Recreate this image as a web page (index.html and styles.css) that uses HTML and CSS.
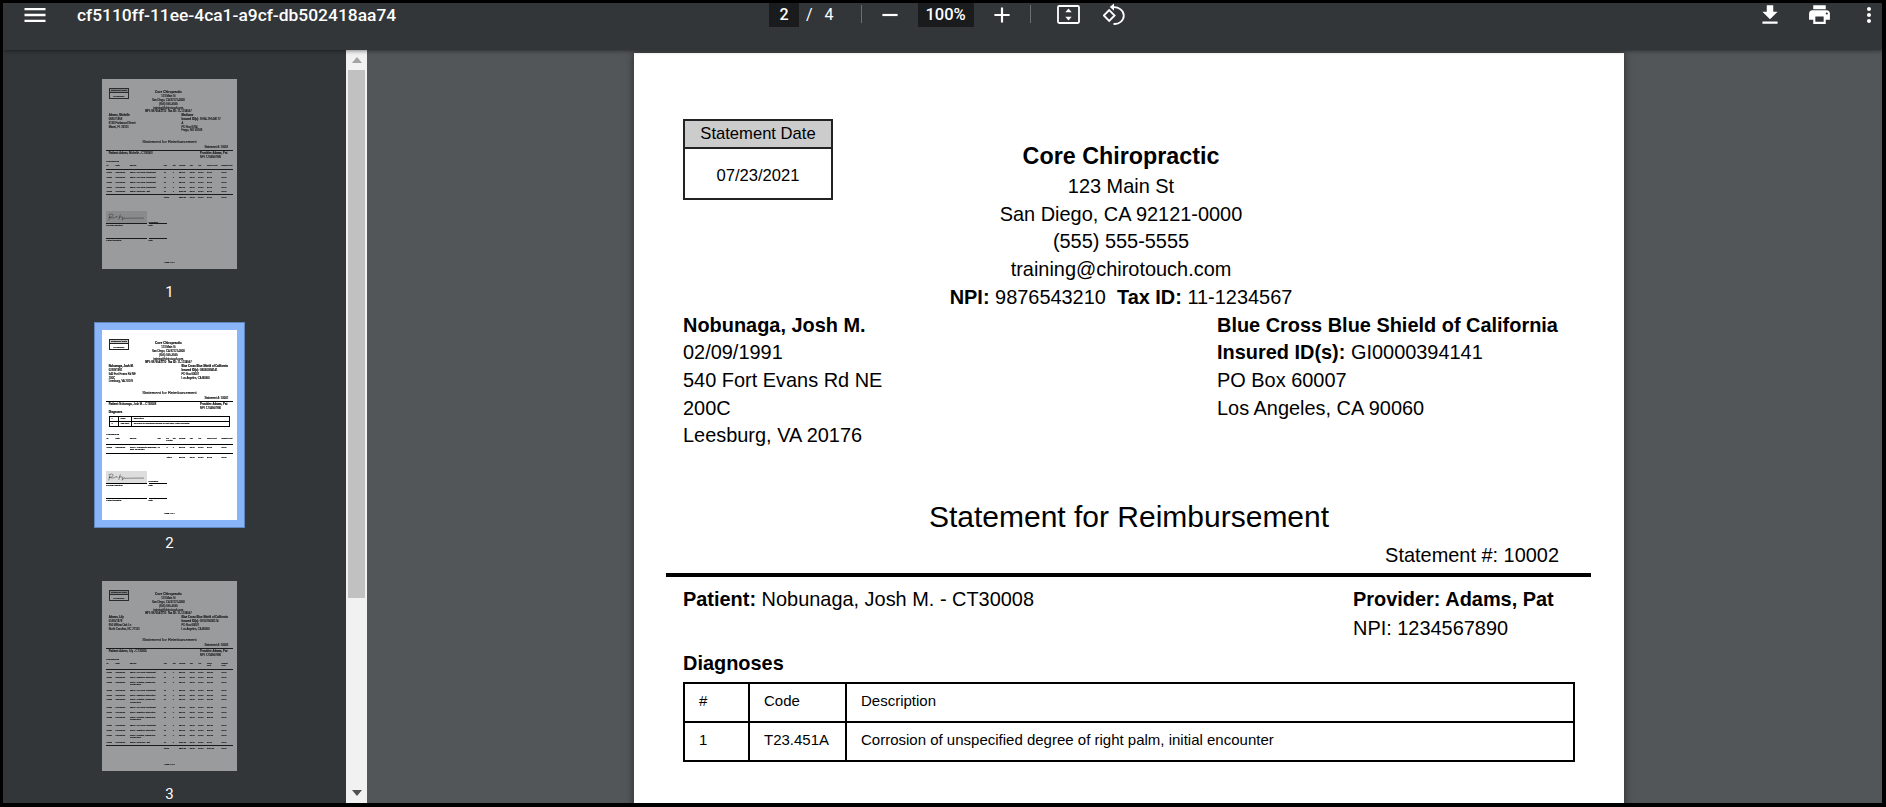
FILE: index.html
```html
<!DOCTYPE html>
<html lang="en">
<head>
    <meta charset="UTF-8">
    <meta name="viewport" content="width=device-width, initial-scale=1.0">
    <title>cf5110ff-11ee-4ca1-a9cf-db502418aa74</title>
    <link rel="stylesheet" href="styles.css">
</head>
<body>
    <div class="viewer">
        <div class="toolbar">
            <div class="toolbar-left">
                <svg class="icon-menu" viewBox="0 0 24 24"><path d="M3 18h18v-2H3v2zm0-5h18v-2H3v2zm0-7v2h18V6H3z"/></svg>
                <span class="doc-title">cf5110ff-11ee-4ca1-a9cf-db502418aa74</span>
            </div>
            <div class="toolbar-center">
                <span class="num-box page-box">2</span>
                <span class="page-slash">/</span>
                <span class="page-total">4</span>
                <span class="tool-sep sep-a"></span>
                <svg class="icon-zoom icon-minus" viewBox="0 0 24 24"><path d="M19 13H5v-2h14v2z"/></svg>
                <span class="num-box zoom-box">100%</span>
                <svg class="icon-zoom icon-plus" viewBox="0 0 24 24"><path d="M19 13h-6v6h-2v-6H5v-2h6V5h2v6h6v2z"/></svg>
                <span class="tool-sep sep-b"></span>
                <svg class="icon-fit" viewBox="0 0 23 19"><rect x="1" y="1" width="21" height="17"  rx="1.2"/><path class="solid" d="M11.5 3.6l3.2 3.6h-6.4zM11.5 15.4l3.2-3.6h-6.4z"/></svg>
                <svg class="icon-rotate" viewBox="0 0 22 22"><path d="M6.2 7.1l5.4 5.4-5.4 5.4-5.4-5.4z"/><path d="M10 4.2c5.8-.4 10.8 3.4 10.8 8.4s-4.8 9-10.3 8.3"/><path class="solid" d="M11 0.4v7.4l-4.2-3.7z"/></svg>
            </div>
            <div class="toolbar-right">
                <svg class="icon-download" viewBox="0 0 24 24"><path d="M19 9h-4V3H9v6H5l7 7 7-7zM5 18v2h14v-2H5z"/></svg>
                <svg class="icon-print" viewBox="0 0 24 24"><path d="M19 8H5c-1.66 0-3 1.34-3 3v6h4v4h12v-4h4v-6c0-1.66-1.34-3-3-3zm-3 11H8v-5h8v5zm3-7c-.55 0-1-.45-1-1s.45-1 1-1 1 .45 1 1-.45 1-1 1zm-1-9H6v4h12V3z"/></svg>
                <svg class="icon-more" viewBox="0 0 24 24"><path d="M12 8c1.1 0 2-.9 2-2s-.9-2-2-2-2 .9-2 2 .9 2 2 2zm0 2c-1.1 0-2 .9-2 2s.9 2 2 2 2-.9 2-2-.9-2-2-2zm0 6c-1.1 0-2 .9-2 2s.9 2 2 2 2-.9 2-2-.9-2-2-2z"/></svg>
            </div>
        </div>

        <div class="content">
            <div class="sidebar">
                <div class="thumb">
                    <div class="thumb-frame dimmed">
                        <div class="thumb-page">
                            <div class="page">
                                <div class="page-head">
                                    <div class="date-box"><div class="date-label">Statement Date</div><div class="date-value">07/23/2021</div></div>
                                    <div class="clinic">
                                        <h2>Core Chiropractic</h2>
                                        <div>123 Main St</div>
                                        <div>San Diego, CA 92121-0000</div>
                                        <div>(555) 555-5555</div>
                                        <div>training@chirotouch.com</div>
                                        <div><b>NPI:</b> 9876543210 &nbsp;<b>Tax ID:</b> 11-1234567</div>
                                    </div>
                                </div>
                                <div class="parties">
                                    <div><b>Adams, Michelle</b><br>08/07/1958<br>8130 Parkwood Street<br>Miami, FL 33101</div>
                                    <div><b>Medicare</b><br><b>Insured ID(s):</b> 1EG4-TE5-MK72<br>A<br>PO Box 6704<br>Fargo, ND 58108</div>
                                </div>
                                <h1 class="statement-title">Statement for Reimbursement</h1>
                                <div class="statement-num">Statement #: 10001</div>
                                <div class="rule"></div>
                                <div class="patient-row">
                                    <div><b>Patient:</b> Adams, Michelle - CT30003</div>
                                    <div><b>Provider: Adams, Pat</b><br>NPI: 1234567890</div>
                                </div>
                                <div class="proc-title proc-title-near">Procedures</div>
                                <table class="proc-table">
                                    <tr><th class="c-id">ID</th><th class="c-date">Date</th><th class="c-svc">Service</th><th class="c-icd">ICD</th><th class="c-qty">Qty</th><th class="c-chg">Charge</th><th class="c-tax">Tax</th><th class="c-adj">Adj</th><th class="c-cop">Copay Cont</th><th class="c-ded">Deduct Cont</th></tr>
                                    <tr><td>13904</td><td>06/29/2021</td><td>98940 - CS Spine Adjustment</td><td>T1</td><td>1</td><td>$50.00</td><td>$0.00</td><td>$0.00</td><td>$0.00</td><td>$0.00</td></tr>
                                    <tr><td>13905</td><td>06/30/2021</td><td>98940 - CS Spine Adjustment</td><td>T1</td><td>1</td><td>$50.00</td><td>$0.00</td><td>$0.00</td><td>$0.00</td><td>$0.00</td></tr>
                                    <tr><td>13906</td><td>07/01/2021</td><td>98940 - CS Spine Adjustment</td><td>T1</td><td>1</td><td>$50.00</td><td>$0.00</td><td>$0.00</td><td>$0.00</td><td>$0.00</td></tr>
                                    <tr><td>13907</td><td>07/02/2021</td><td>98940 - CS Spine Adjustment</td><td>T1</td><td>1</td><td>$50.00</td><td>$0.00</td><td>$0.00</td><td>$0.00</td><td>$0.00</td></tr>
                                    <tr><td>13908</td><td>07/06/2021</td><td>99213 - Re-exam - Est.</td><td>T1</td><td>1</td><td>$150.00</td><td>$0.00</td><td>$0.00</td><td>$0.00</td><td>$0.00</td></tr>
                                    <tr class="total-row"><td></td><td></td><td></td><td colspan="2">Totals</td><td>$350.00</td><td>$0.00</td><td>$0.00</td><td>$0.00</td><td>$0.00</td></tr>
                                </table>
                                <div class="sign-grid">
                                    <div class="sign-img"><svg viewBox="0 0 300 90"><path d="M24 34c-4 14-6 26-8 38M14 30c20-10 38-8 34 6-3 9-20 12-30 12 14 4 24 8 38 4 8-3 14-10 20-10-2 6 0 8 6 6M104 26c-6 16-8 30-12 42M92 48c14-2 22-6 28-2 0 10-2 18 0 24 4-6 8-20 14-20 0 8 4 8 10 6 40-2 90-2 140-2"/></svg></div>
                                    <div class="sign-date">07/23/2021</div>
                                    <div class="sign-label">Provider Signature</div>
                                    <div class="sign-label">Date</div>
                                    <div class="sign-blank"></div>
                                    <div class="sign-blank"></div>
                                    <div class="sign-label">Patient Signature</div>
                                    <div class="sign-label">Date</div>
                                </div>
                                <div class="page-foot">Page 1 of 1</div>
                            </div>
                        </div>
                    </div>
                    <div class="thumb-num">1</div>
                </div>

                <div class="thumb">
                    <div class="thumb-frame selected">
                        <div class="thumb-page">
                            <div class="page">
                                <div class="page-head">
                                    <div class="date-box"><div class="date-label">Statement Date</div><div class="date-value">07/23/2021</div></div>
                                    <div class="clinic">
                                        <h2>Core Chiropractic</h2>
                                        <div>123 Main St</div>
                                        <div>San Diego, CA 92121-0000</div>
                                        <div>(555) 555-5555</div>
                                        <div>training@chirotouch.com</div>
                                        <div><b>NPI:</b> 9876543210 &nbsp;<b>Tax ID:</b> 11-1234567</div>
                                    </div>
                                </div>
                                <div class="parties">
                                    <div><b>Nobunaga, Josh M.</b><br>02/09/1991<br>540 Fort Evans Rd NE<br>200C<br>Leesburg, VA 20176</div>
                                    <div><b>Blue Cross Blue Shield of California</b><br><b>Insured ID(s):</b> GI0000394141<br>PO Box 60007<br>Los Angeles, CA 90060</div>
                                </div>
                                <h1 class="statement-title">Statement for Reimbursement</h1>
                                <div class="statement-num">Statement #: 10002</div>
                                <div class="rule"></div>
                                <div class="patient-row">
                                    <div><b>Patient:</b> Nobunaga, Josh M. - CT30008</div>
                                    <div><b>Provider: Adams, Pat</b><br>NPI: 1234567890</div>
                                </div>
                                <div class="diag-title">Diagnoses</div>
                                <table class="diag-table">
                                    <tr><td class="diag-num">#</td><td class="diag-code">Code</td><td>Description</td></tr>
                                    <tr><td>1</td><td>T23.451A</td><td>Corrosion of unspecified degree of right palm, initial encounter</td></tr>
                                </table>
                                <div class="proc-title">Procedures</div>
                                <table class="proc-table with-ptr">
                                    <tr><th class="c-id">ID</th><th class="c-date">Date</th><th class="c-svc">Service</th><th class="c-icd">ICD</th><th class="c-ptr">DX Pointer</th><th class="c-qty">Qty</th><th class="c-chg">Charge</th><th class="c-tax">Tax</th><th class="c-adj">Adj</th><th class="c-cop">Open Cont</th><th class="c-ded">Deduct Cont</th></tr>
                                    <tr class="tallest-row"><td>13912</td><td>06/30/2021</td><td>97110 - Therapeutic exercises, each 15 minutes</td><td>T1</td><td>1</td><td>1</td><td>$40.00</td><td>$0.00</td><td>$0.00</td><td>$0.00</td><td>$0.00</td></tr>
                                    <tr class="total-row"><td></td><td></td><td></td><td></td><td colspan="2">Totals</td><td>$40.00</td><td>$0.00</td><td>$0.00</td><td>$0.00</td><td>$0.00</td></tr>
                                </table>
                                <div class="sign-grid">
                                    <div class="sign-img"><svg viewBox="0 0 300 90"><path d="M24 34c-4 14-6 26-8 38M14 30c20-10 38-8 34 6-3 9-20 12-30 12 14 4 24 8 38 4 8-3 14-10 20-10-2 6 0 8 6 6M104 26c-6 16-8 30-12 42M92 48c14-2 22-6 28-2 0 10-2 18 0 24 4-6 8-20 14-20 0 8 4 8 10 6 40-2 90-2 140-2"/></svg></div>
                                    <div class="sign-date">07/23/2021</div>
                                    <div class="sign-label">Provider Signature</div>
                                    <div class="sign-label">Date</div>
                                    <div class="sign-blank"></div>
                                    <div class="sign-blank"></div>
                                    <div class="sign-label">Patient Signature</div>
                                    <div class="sign-label">Date</div>
                                </div>
                                <div class="page-foot">Page 1 of 1</div>
                            </div>
                        </div>
                    </div>
                    <div class="thumb-num">2</div>
                </div>

                <div class="thumb">
                    <div class="thumb-frame dimmed">
                        <div class="thumb-page">
                            <div class="page">
                                <div class="page-head">
                                    <div class="date-box"><div class="date-label">Statement Date</div><div class="date-value">07/23/2021</div></div>
                                    <div class="clinic">
                                        <h2>Core Chiropractic</h2>
                                        <div>123 Main St</div>
                                        <div>San Diego, CA 92121-0000</div>
                                        <div>(555) 555-5555</div>
                                        <div>training@chirotouch.com</div>
                                        <div><b>NPI:</b> 9876543210 &nbsp;<b>Tax ID:</b> 11-1234567</div>
                                    </div>
                                </div>
                                <div class="parties">
                                    <div><b>Adams, Lily</b><br>01/05/1979<br>850 Willow Oak Ln<br>North Carolina, NC 27101</div>
                                    <div><b>Blue Cross Blue Shield of California</b><br><b>Insured ID(s):</b> GT0075000124<br>PO Box 60007<br>Los Angeles, CA 90060</div>
                                </div>
                                <h1 class="statement-title">Statement for Reimbursement</h1>
                                <div class="statement-num">Statement #: 10003</div>
                                <div class="rule"></div>
                                <div class="patient-row">
                                    <div><b>Patient:</b> Adams, Lily - CT30005</div>
                                    <div><b>Provider: Adams, Pat</b><br>NPI: 1234567890</div>
                                </div>
                                <div class="proc-title proc-title-near">Procedures</div>
                                <table class="proc-table">
                                    <tr><th class="c-id">ID</th><th class="c-date">Date</th><th class="c-svc">Service</th><th class="c-icd">ICD</th><th class="c-qty">Qty</th><th class="c-chg">Charge</th><th class="c-tax">Tax</th><th class="c-adj">Adj</th><th class="c-cop">Open<br>Cont</th><th class="c-ded">Deduct<br>Cont</th></tr>
                                    <tr><td>13920</td><td>06/28/2021</td><td>98940 - CS Spine Adjustment</td><td>T1</td><td>1</td><td>$50.00</td><td>$0.00</td><td>$0.00</td><td>$50.00</td><td>$0.00</td></tr>
                                    <tr><td>13921</td><td>06/28/2021</td><td>97014 - Electrical Stimulation</td><td>T1</td><td>1</td><td>$30.00</td><td>$0.00</td><td>$0.00</td><td>$30.00</td><td>$0.00</td></tr>
                                    <tr class="tall-row"><td>13922</td><td>06/28/2021</td><td>97012 - Traction, Mechanical Combination</td><td>T1</td><td>1</td><td>$30.00</td><td>$0.00</td><td>$0.00</td><td>$30.00</td><td>$0.00</td></tr>
                                    <tr><td>13923</td><td>06/30/2021</td><td>98940 - CS Spine Adjustment</td><td>T1</td><td>1</td><td>$50.00</td><td>$0.00</td><td>$0.00</td><td>$50.00</td><td>$0.00</td></tr>
                                    <tr><td>13924</td><td>06/30/2021</td><td>97014 - Electrical Stimulation</td><td>T1</td><td>1</td><td>$30.00</td><td>$0.00</td><td>$0.00</td><td>$30.00</td><td>$0.00</td></tr>
                                    <tr class="tall-row"><td>13925</td><td>06/30/2021</td><td>97012 - Traction, Mechanical Combination</td><td>T1</td><td>1</td><td>$30.00</td><td>$0.00</td><td>$0.00</td><td>$30.00</td><td>$0.00</td></tr>
                                    <tr><td>13926</td><td>07/02/2021</td><td>98940 - CS Spine Adjustment</td><td>T1</td><td>1</td><td>$50.00</td><td>$0.00</td><td>$0.00</td><td>$50.00</td><td>$0.00</td></tr>
                                    <tr><td>13927</td><td>07/02/2021</td><td>97014 - Electrical Stimulation</td><td>T1</td><td>1</td><td>$30.00</td><td>$0.00</td><td>$0.00</td><td>$30.00</td><td>$0.00</td></tr>
                                    <tr class="tall-row"><td>13928</td><td>07/02/2021</td><td>97012 - Traction, Mechanical Combination</td><td>T1</td><td>1</td><td>$30.00</td><td>$0.00</td><td>$0.00</td><td>$30.00</td><td>$0.00</td></tr>
                                    <tr><td>13929</td><td>07/06/2021</td><td>98940 - CS Spine Adjustment</td><td>T1</td><td>1</td><td>$50.00</td><td>$0.00</td><td>$0.00</td><td>$50.00</td><td>$0.00</td></tr>
                                    <tr><td>13930</td><td>07/06/2021</td><td>97014 - Electrical Stimulation</td><td>T1</td><td>1</td><td>$30.00</td><td>$0.00</td><td>$0.00</td><td>$30.00</td><td>$0.00</td></tr>
                                    <tr class="tall-row"><td>13931</td><td>07/06/2021</td><td>97012 - Traction, Mechanical Combination</td><td>T1</td><td>1</td><td>$30.00</td><td>$0.00</td><td>$0.00</td><td>$30.00</td><td>$0.00</td></tr>
                                    <tr><td>13932</td><td>07/09/2021</td><td>99213 - Re-exam - Est.</td><td>T1</td><td>1</td><td>$150.00</td><td>$0.00</td><td>$0.00</td><td>$0.00</td><td>$0.00</td></tr>
                                    <tr class="total-row"><td></td><td></td><td></td><td colspan="2">Totals</td><td>$560.00</td><td>$0.00</td><td>$0.00</td><td>$410.00</td><td>$0.00</td></tr>
                                </table>
                                <div class="page-foot">Page 1 of 2</div>
                            </div>
                        </div>
                    </div>
                    <div class="thumb-num">3</div>
                </div>
            </div>

            <div class="scrollbar">
                <div class="scroll-btn"><span class="arrow-up"></span></div>
                <div class="scroll-thumb"></div>
                <div class="scroll-track"></div>
                <div class="scroll-btn"><span class="arrow-down"></span></div>
            </div>

            <div class="main">
                <div class="page">
                    <div class="page-head">
                        <div class="date-box"><div class="date-label">Statement Date</div><div class="date-value">07/23/2021</div></div>
                        <div class="clinic">
                            <h2>Core Chiropractic</h2>
                            <div>123 Main St</div>
                            <div>San Diego, CA 92121-0000</div>
                            <div>(555) 555-5555</div>
                            <div>training@chirotouch.com</div>
                            <div><b>NPI:</b> 9876543210 &nbsp;<b>Tax ID:</b> 11-1234567</div>
                        </div>
                    </div>
                    <div class="parties">
                        <div><b>Nobunaga, Josh M.</b><br>02/09/1991<br>540 Fort Evans Rd NE<br>200C<br>Leesburg, VA 20176</div>
                        <div><b>Blue Cross Blue Shield of California</b><br><b>Insured ID(s):</b> GI0000394141<br>PO Box 60007<br>Los Angeles, CA 90060</div>
                    </div>
                    <h1 class="statement-title">Statement for Reimbursement</h1>
                    <div class="statement-num">Statement #: 10002</div>
                    <div class="rule"></div>
                    <div class="patient-row">
                        <div><b>Patient:</b> Nobunaga, Josh M. - CT30008</div>
                        <div><b>Provider: Adams, Pat</b><br>NPI: 1234567890</div>
                    </div>
                    <div class="diag-title">Diagnoses</div>
                    <table class="diag-table">
                        <tr><td class="diag-num">#</td><td class="diag-code">Code</td><td>Description</td></tr>
                        <tr><td>1</td><td>T23.451A</td><td>Corrosion of unspecified degree of right palm, initial encounter</td></tr>
                    </table>
                </div>
            </div>
        </div>
    </div>
</body>
</html>
```

FILE: styles.css
```css
* {
    box-sizing: border-box;
}

html, body {
    height: 100%;
    margin: 0;
}

body {
    background-color: #000;
    overflow: hidden;
    font-family: "Liberation Sans", Arial, sans-serif;
}

.viewer {
    display: flex;
    flex-direction: column;
    height: 100%;
    padding: 3px 4px 4px 3px;
}

/* Toolbar */
.toolbar {
    position: relative;
    z-index: 2;
    flex: none;
    display: grid;
    grid-template-columns: 766px 360px 1fr;
    height: 47px;
    background-color: #323639;
    box-shadow: 0 1px 4px rgba(0, 0, 0, 0.45);
    color: #fff;
    fill: #fff;
    font-family: Roboto, sans-serif;
}

.toolbar svg {
    display: block;
    flex: none;
}

.toolbar-left,
.toolbar-center,
.toolbar-right {
    display: flex;
    align-items: flex-start;
}

.icon-menu {
    width: 28px;
    height: 28px;
    margin: -2px 0 0 17.5px;
}

.doc-title {
    margin-left: 28.5px;
    font-size: 17.4px;
    font-weight: 500;
    line-height: 24px;
}

.num-box {
    height: 24px;
    background-color: #191b1c;
    font-size: 16px;
    line-height: 24px;
    text-align: center;
}

.page-box {
    width: 30px;
    font-weight: 500;
}

.page-slash,
.page-total {
    font-size: 16px;
    line-height: 24px;
}

.page-slash {
    margin-left: 7px;
}

.page-total {
    margin-left: 12px;
}

.tool-sep {
    width: 1px;
    height: 18px;
    margin-top: 2px;
    background-color: #6b6f72;
}

.sep-a {
    margin-left: 27px;
}

.icon-zoom {
    width: 26px;
    height: 26px;
    margin-top: -1px;
}

.icon-minus {
    margin-left: 15.5px;
}

.zoom-box {
    width: 56px;
    margin-left: 14.5px;
    font-size: 16.5px;
    font-weight: 500;
}

.icon-plus {
    margin-left: 15px;
}

.sep-b {
    margin-left: 15px;
}

.icon-fit {
    width: 23px;
    height: 19px;
    margin: 2px 0 0 26px;
}

.icon-fit rect,
.icon-rotate path {
    fill: none;
    stroke: #fff;
    stroke-width: 1.8;
}

.icon-fit .solid,
.icon-rotate .solid {
    fill: #fff;
    stroke: none;
}

.icon-rotate {
    width: 22px;
    height: 22px;
    margin: 0 0 0 23px;
}

.toolbar-right {
    padding-left: 627.6px;
}

.icon-download {
    width: 26px;
    height: 26px;
    margin-top: -1px;
}

.icon-print {
    width: 25px;
    height: 25px;
    margin: -1px 0 0 24.4px;
}

.icon-more {
    width: 24px;
    height: 24px;
    margin: 0 0 0 25px;
}

/* Body of the viewer */
.content {
    flex: 1;
    display: grid;
    grid-template-columns: 343px 21px 1fr;
    min-height: 0;
}

.sidebar {
    padding: 21px 0 0 91px;
    background-color: #323639;
    overflow: hidden;
}

.thumb {
    width: 151px;
    margin-bottom: 22px;
}

.thumb-frame {
    padding: 8px;
}

.thumb-frame.selected {
    background-color: #8ab4f8;
    box-shadow: inset 0 0 0 1px #5f86bd;
}

.thumb-frame.dimmed .thumb-page {
    opacity: 0.5;
}

.thumb-page {
    width: 135px;
    height: 190px;
    overflow: hidden;
    background-color: #fff;
}

/* the thumbnails are the same page, shrunk */
.thumb-page .page {
    zoom: 0.1364;
    box-shadow: none;
    filter: blur(0.35px);
    -webkit-text-stroke: 1px #000;
}

.thumb-num {
    margin-top: 7px;
    color: #fff;
    font-family: Roboto, sans-serif;
    font-size: 15px;
    line-height: 16px;
    text-align: center;
}

/* Scrollbar next to the thumbnails */
.scrollbar {
    display: flex;
    flex-direction: column;
    height: 100%;
    padding: 0 2px;
    background-color: #f1f1f1;
}

.scroll-btn {
    flex: none;
    display: flex;
    align-items: center;
    justify-content: center;
    height: 20px;
}

.arrow-up,
.arrow-down {
    width: 0;
    height: 0;
    border-left: 5px solid transparent;
    border-right: 5px solid transparent;
}

.arrow-up {
    border-bottom: 6px solid #a3a3a3;
}

.arrow-down {
    border-top: 6px solid #505050;
}

.scroll-thumb {
    flex: none;
    height: 528px;
    background-color: #c1c1c1;
}

.scroll-track {
    flex: 1;
}

/* Document pane */
.main {
    padding: 3px 0 0 267px;
    background-color: #525659;
    overflow: hidden;
}

.page {
    display: flex;
    flex-direction: column;
    width: 990px;
    height: 1397px;
    padding-top: 66px;
    background-color: #fff;
    box-shadow: 0 0 8px rgba(0, 0, 0, 0.5);
    color: #000;
    font-size: 19.93px;
    line-height: 27.7px;
}

.page-head {
    display: grid;
    width: 876px;
    margin-left: 49px;
}

.date-box,
.clinic {
    grid-area: 1 / 1;
}

.date-box {
    justify-self: start;
    width: 150px;
    height: 81px;
    border: 2px solid #222;
    font-size: 16.6px;
    text-align: center;
}

.date-label {
    height: 28px;
    border-bottom: 2px solid #222;
    background-color: #ccc;
    line-height: 25px;
}

.date-value {
    line-height: 54px;
}

.clinic {
    margin-top: 22.5px;
    text-align: center;
}

.clinic h2 {
    margin: 0 0 3.5px;
    font-size: 23.3px;
    line-height: 28px;
}

.parties {
    display: grid;
    grid-template-columns: 534px 1fr;
    margin-left: 49px;
}

.statement-title {
    margin: 49px 0 0;
    font-size: 30px;
    font-weight: normal;
    line-height: 36px;
    text-align: center;
}

.statement-num {
    width: 925px;
    margin: 7px 0 0;
    text-align: right;
}

.rule {
    width: 925px;
    height: 4px;
    margin: 3.6px 0 0 32px;
    background-color: #000;
}

.patient-row {
    display: grid;
    grid-template-columns: 670px 1fr;
    margin: 8px 0 0 49px;
    line-height: 29px;
}

.diag-title {
    margin: 6.7px 0 4.3px 49px;
    font-weight: bold;
}

.diag-table {
    width: 892px;
    margin-left: 49px;
    border-collapse: collapse;
    table-layout: fixed;
    font-size: 15px;
}

.diag-table td {
    height: 39px;
    padding: 0 14px 3px;
    border: 2px solid #000;
}

.diag-num {
    width: 65px;
}

.diag-code {
    width: 97px;
}

/* Only seen on the thumbnails */
.proc-title {
    margin: 41px 0 0 32px;
    font-weight: bold;
    font-size: 17px;
    line-height: 22px;
}

.proc-title-near {
    margin-top: 5px;
}

.proc-table {
    width: 931px;
    margin-left: 32px;
    border-collapse: collapse;
    table-layout: fixed;
    font-size: 14.5px;
    line-height: 16px;
}

.proc-table th {
    padding: 5px 0 19px;
    border-bottom: 4px solid #000;
    font-weight: normal;
    text-align: left;
    vertical-align: top;
}

.proc-table td {
    height: 37px;
    vertical-align: middle;
}

.proc-table .tall-row td {
    height: 56px;
    vertical-align: top;
    padding-top: 8px;
}

.proc-table .tallest-row td {
    height: 72px;
    vertical-align: top;
    padding-top: 8px;
}

.total-row td {
    border-top: 6px solid #000;
}

.c-id { width: 67px; }
.c-date { width: 105px; }
.c-svc { width: 248px; }
.c-icd { width: 66px; }
.c-ptr { width: 46px; }
.c-qty { width: 46px; }
.c-chg { width: 79px; }
.c-tax { width: 63px; }
.c-adj { width: 64px; }
.c-cop { width: 106px; }
.c-ded { width: 87px; }

.with-ptr .c-svc { width: 202px; }

.sign-grid {
    display: grid;
    grid-template-columns: 299px 135px;
    column-gap: 10px;
    margin: 89px 0 0 32px;
    font-size: 14.5px;
    line-height: 18px;
}

.sign-img {
    height: 94px;
    border-bottom: 4px solid #000;
    background-color: #ddd;
}

.sign-img svg {
    display: block;
    width: 100%;
    height: 100%;
    fill: none;
    stroke: #000;
    stroke-width: 3;
}

.sign-date {
    align-self: end;
    border-bottom: 4px solid #000;
}

.sign-blank {
    height: 90px;
    border-bottom: 4px solid #000;
}

.page-foot {
    margin-top: auto;
    padding-bottom: 38px;
    font-size: 14.5px;
    text-align: center;
}
```
